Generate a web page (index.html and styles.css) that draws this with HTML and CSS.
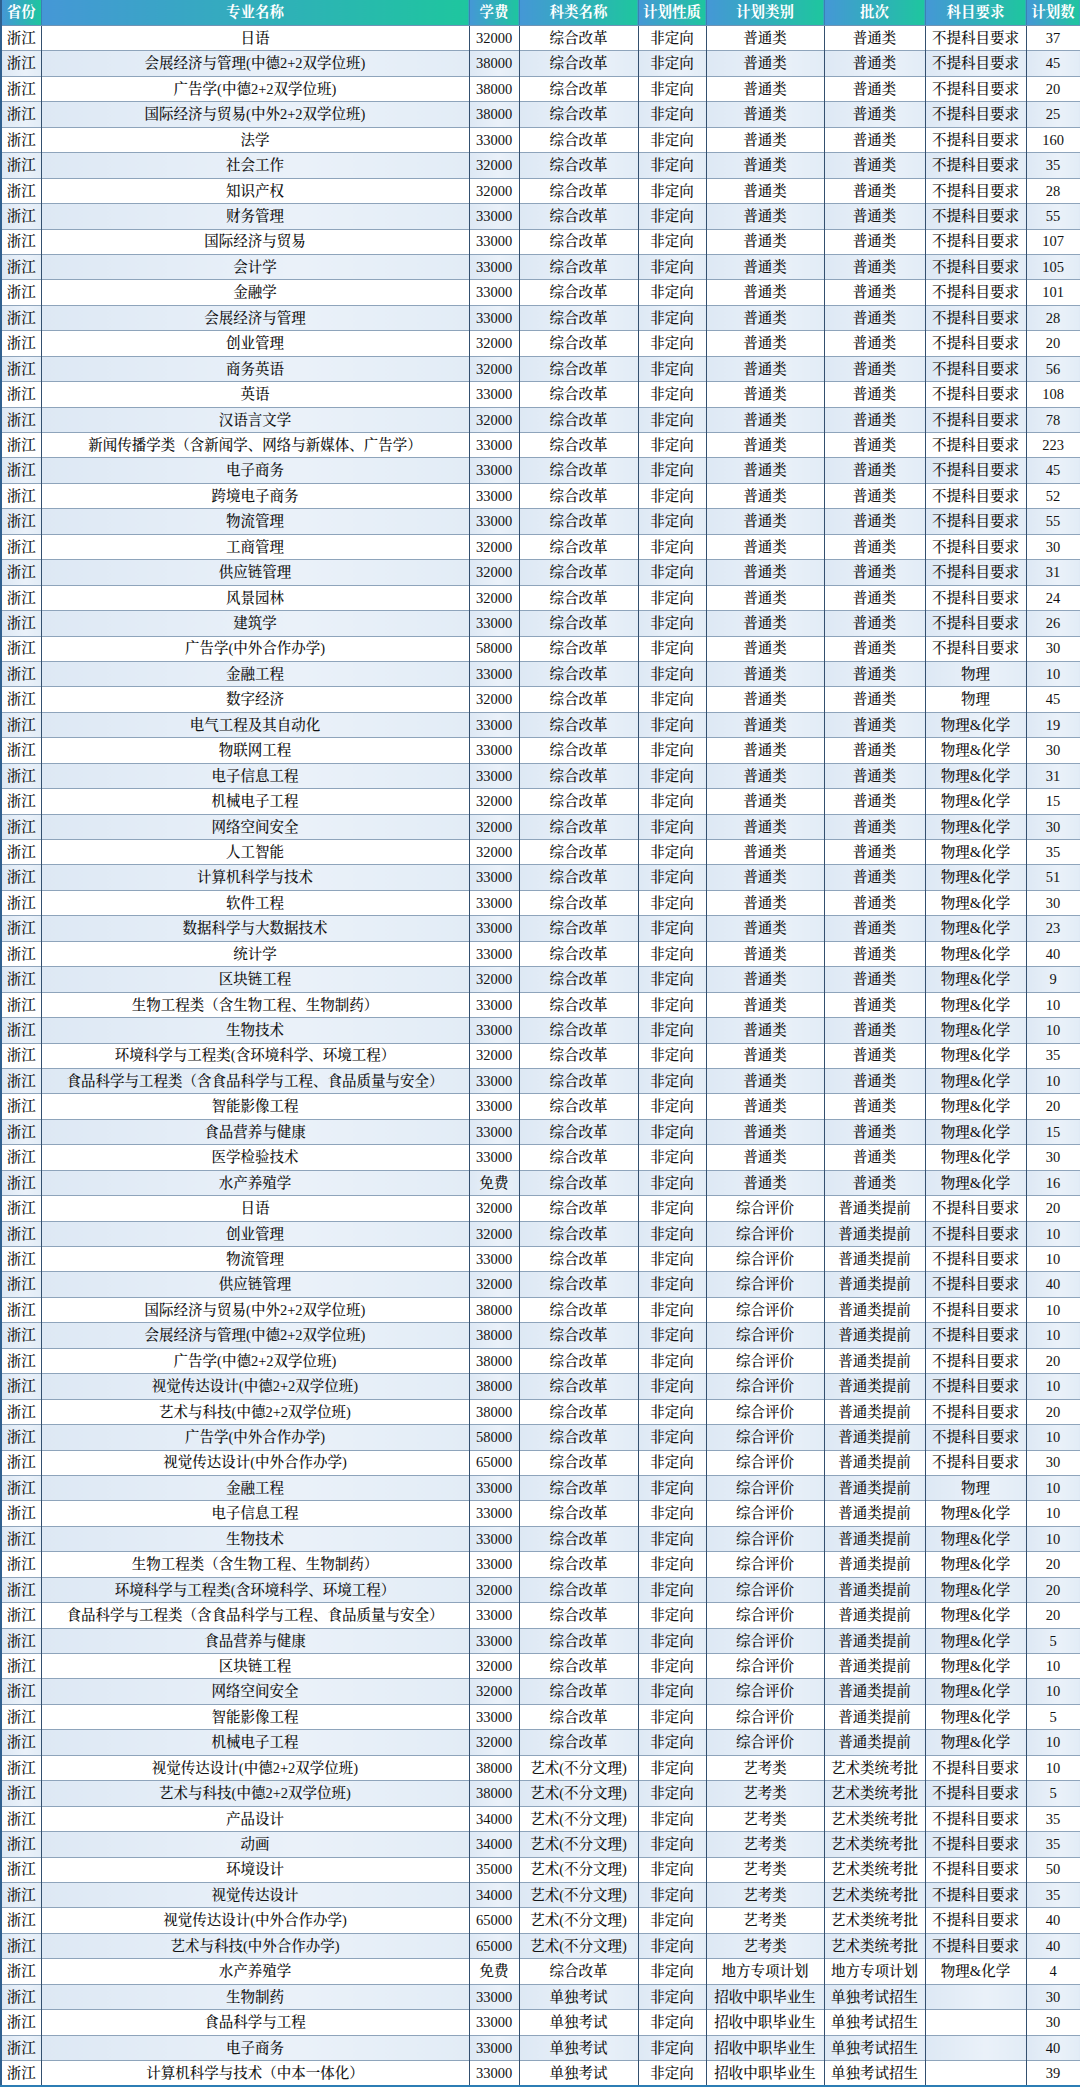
FILE: index.html
```html
<!DOCTYPE html>
<html lang="zh-CN">
<head>
<meta charset="utf-8">
<title>招生计划</title>
<link rel="stylesheet" href="styles.css">
</head>
<body>
<table class="plan">
<colgroup>
<col class="c-prov"><col class="c-name"><col class="c-fee"><col class="c-kind"><col class="c-nature"><col class="c-cat"><col class="c-batch"><col class="c-subj"><col class="c-num">
</colgroup>
<thead>
<tr><th>省份</th><th>专业名称</th><th>学费</th><th>科类名称</th><th>计划性质</th><th>计划类别</th><th>批次</th><th>科目要求</th><th>计划数</th></tr>
</thead>
<tbody>
<tr><td>浙江</td><td>日语</td><td>32000</td><td>综合改革</td><td>非定向</td><td>普通类</td><td>普通类</td><td>不提科目要求</td><td>37</td></tr>
<tr><td>浙江</td><td>会展经济与管理(中德2+2双学位班)</td><td>38000</td><td>综合改革</td><td>非定向</td><td>普通类</td><td>普通类</td><td>不提科目要求</td><td>45</td></tr>
<tr><td>浙江</td><td>广告学(中德2+2双学位班)</td><td>38000</td><td>综合改革</td><td>非定向</td><td>普通类</td><td>普通类</td><td>不提科目要求</td><td>20</td></tr>
<tr><td>浙江</td><td>国际经济与贸易(中外2+2双学位班)</td><td>38000</td><td>综合改革</td><td>非定向</td><td>普通类</td><td>普通类</td><td>不提科目要求</td><td>25</td></tr>
<tr><td>浙江</td><td>法学</td><td>33000</td><td>综合改革</td><td>非定向</td><td>普通类</td><td>普通类</td><td>不提科目要求</td><td>160</td></tr>
<tr><td>浙江</td><td>社会工作</td><td>32000</td><td>综合改革</td><td>非定向</td><td>普通类</td><td>普通类</td><td>不提科目要求</td><td>35</td></tr>
<tr><td>浙江</td><td>知识产权</td><td>32000</td><td>综合改革</td><td>非定向</td><td>普通类</td><td>普通类</td><td>不提科目要求</td><td>28</td></tr>
<tr><td>浙江</td><td>财务管理</td><td>33000</td><td>综合改革</td><td>非定向</td><td>普通类</td><td>普通类</td><td>不提科目要求</td><td>55</td></tr>
<tr><td>浙江</td><td>国际经济与贸易</td><td>33000</td><td>综合改革</td><td>非定向</td><td>普通类</td><td>普通类</td><td>不提科目要求</td><td>107</td></tr>
<tr><td>浙江</td><td>会计学</td><td>33000</td><td>综合改革</td><td>非定向</td><td>普通类</td><td>普通类</td><td>不提科目要求</td><td>105</td></tr>
<tr><td>浙江</td><td>金融学</td><td>33000</td><td>综合改革</td><td>非定向</td><td>普通类</td><td>普通类</td><td>不提科目要求</td><td>101</td></tr>
<tr><td>浙江</td><td>会展经济与管理</td><td>33000</td><td>综合改革</td><td>非定向</td><td>普通类</td><td>普通类</td><td>不提科目要求</td><td>28</td></tr>
<tr><td>浙江</td><td>创业管理</td><td>32000</td><td>综合改革</td><td>非定向</td><td>普通类</td><td>普通类</td><td>不提科目要求</td><td>20</td></tr>
<tr><td>浙江</td><td>商务英语</td><td>32000</td><td>综合改革</td><td>非定向</td><td>普通类</td><td>普通类</td><td>不提科目要求</td><td>56</td></tr>
<tr><td>浙江</td><td>英语</td><td>33000</td><td>综合改革</td><td>非定向</td><td>普通类</td><td>普通类</td><td>不提科目要求</td><td>108</td></tr>
<tr><td>浙江</td><td>汉语言文学</td><td>32000</td><td>综合改革</td><td>非定向</td><td>普通类</td><td>普通类</td><td>不提科目要求</td><td>78</td></tr>
<tr><td>浙江</td><td>新闻传播学类（含新闻学、网络与新媒体、广告学）</td><td>33000</td><td>综合改革</td><td>非定向</td><td>普通类</td><td>普通类</td><td>不提科目要求</td><td>223</td></tr>
<tr><td>浙江</td><td>电子商务</td><td>33000</td><td>综合改革</td><td>非定向</td><td>普通类</td><td>普通类</td><td>不提科目要求</td><td>45</td></tr>
<tr><td>浙江</td><td>跨境电子商务</td><td>33000</td><td>综合改革</td><td>非定向</td><td>普通类</td><td>普通类</td><td>不提科目要求</td><td>52</td></tr>
<tr><td>浙江</td><td>物流管理</td><td>33000</td><td>综合改革</td><td>非定向</td><td>普通类</td><td>普通类</td><td>不提科目要求</td><td>55</td></tr>
<tr><td>浙江</td><td>工商管理</td><td>32000</td><td>综合改革</td><td>非定向</td><td>普通类</td><td>普通类</td><td>不提科目要求</td><td>30</td></tr>
<tr><td>浙江</td><td>供应链管理</td><td>32000</td><td>综合改革</td><td>非定向</td><td>普通类</td><td>普通类</td><td>不提科目要求</td><td>31</td></tr>
<tr><td>浙江</td><td>风景园林</td><td>32000</td><td>综合改革</td><td>非定向</td><td>普通类</td><td>普通类</td><td>不提科目要求</td><td>24</td></tr>
<tr><td>浙江</td><td>建筑学</td><td>33000</td><td>综合改革</td><td>非定向</td><td>普通类</td><td>普通类</td><td>不提科目要求</td><td>26</td></tr>
<tr><td>浙江</td><td>广告学(中外合作办学)</td><td>58000</td><td>综合改革</td><td>非定向</td><td>普通类</td><td>普通类</td><td>不提科目要求</td><td>30</td></tr>
<tr><td>浙江</td><td>金融工程</td><td>33000</td><td>综合改革</td><td>非定向</td><td>普通类</td><td>普通类</td><td>物理</td><td>10</td></tr>
<tr><td>浙江</td><td>数字经济</td><td>32000</td><td>综合改革</td><td>非定向</td><td>普通类</td><td>普通类</td><td>物理</td><td>45</td></tr>
<tr><td>浙江</td><td>电气工程及其自动化</td><td>33000</td><td>综合改革</td><td>非定向</td><td>普通类</td><td>普通类</td><td>物理&amp;化学</td><td>19</td></tr>
<tr><td>浙江</td><td>物联网工程</td><td>33000</td><td>综合改革</td><td>非定向</td><td>普通类</td><td>普通类</td><td>物理&amp;化学</td><td>30</td></tr>
<tr><td>浙江</td><td>电子信息工程</td><td>33000</td><td>综合改革</td><td>非定向</td><td>普通类</td><td>普通类</td><td>物理&amp;化学</td><td>31</td></tr>
<tr><td>浙江</td><td>机械电子工程</td><td>32000</td><td>综合改革</td><td>非定向</td><td>普通类</td><td>普通类</td><td>物理&amp;化学</td><td>15</td></tr>
<tr><td>浙江</td><td>网络空间安全</td><td>32000</td><td>综合改革</td><td>非定向</td><td>普通类</td><td>普通类</td><td>物理&amp;化学</td><td>30</td></tr>
<tr><td>浙江</td><td>人工智能</td><td>32000</td><td>综合改革</td><td>非定向</td><td>普通类</td><td>普通类</td><td>物理&amp;化学</td><td>35</td></tr>
<tr><td>浙江</td><td>计算机科学与技术</td><td>33000</td><td>综合改革</td><td>非定向</td><td>普通类</td><td>普通类</td><td>物理&amp;化学</td><td>51</td></tr>
<tr><td>浙江</td><td>软件工程</td><td>33000</td><td>综合改革</td><td>非定向</td><td>普通类</td><td>普通类</td><td>物理&amp;化学</td><td>30</td></tr>
<tr><td>浙江</td><td>数据科学与大数据技术</td><td>33000</td><td>综合改革</td><td>非定向</td><td>普通类</td><td>普通类</td><td>物理&amp;化学</td><td>23</td></tr>
<tr><td>浙江</td><td>统计学</td><td>33000</td><td>综合改革</td><td>非定向</td><td>普通类</td><td>普通类</td><td>物理&amp;化学</td><td>40</td></tr>
<tr><td>浙江</td><td>区块链工程</td><td>32000</td><td>综合改革</td><td>非定向</td><td>普通类</td><td>普通类</td><td>物理&amp;化学</td><td>9</td></tr>
<tr><td>浙江</td><td>生物工程类（含生物工程、生物制药）</td><td>33000</td><td>综合改革</td><td>非定向</td><td>普通类</td><td>普通类</td><td>物理&amp;化学</td><td>10</td></tr>
<tr><td>浙江</td><td>生物技术</td><td>33000</td><td>综合改革</td><td>非定向</td><td>普通类</td><td>普通类</td><td>物理&amp;化学</td><td>10</td></tr>
<tr><td>浙江</td><td>环境科学与工程类(含环境科学、环境工程）</td><td>32000</td><td>综合改革</td><td>非定向</td><td>普通类</td><td>普通类</td><td>物理&amp;化学</td><td>35</td></tr>
<tr><td>浙江</td><td>食品科学与工程类（含食品科学与工程、食品质量与安全）</td><td>33000</td><td>综合改革</td><td>非定向</td><td>普通类</td><td>普通类</td><td>物理&amp;化学</td><td>10</td></tr>
<tr><td>浙江</td><td>智能影像工程</td><td>33000</td><td>综合改革</td><td>非定向</td><td>普通类</td><td>普通类</td><td>物理&amp;化学</td><td>20</td></tr>
<tr><td>浙江</td><td>食品营养与健康</td><td>33000</td><td>综合改革</td><td>非定向</td><td>普通类</td><td>普通类</td><td>物理&amp;化学</td><td>15</td></tr>
<tr><td>浙江</td><td>医学检验技术</td><td>33000</td><td>综合改革</td><td>非定向</td><td>普通类</td><td>普通类</td><td>物理&amp;化学</td><td>30</td></tr>
<tr><td>浙江</td><td>水产养殖学</td><td>免费</td><td>综合改革</td><td>非定向</td><td>普通类</td><td>普通类</td><td>物理&amp;化学</td><td>16</td></tr>
<tr><td>浙江</td><td>日语</td><td>32000</td><td>综合改革</td><td>非定向</td><td>综合评价</td><td>普通类提前</td><td>不提科目要求</td><td>20</td></tr>
<tr><td>浙江</td><td>创业管理</td><td>32000</td><td>综合改革</td><td>非定向</td><td>综合评价</td><td>普通类提前</td><td>不提科目要求</td><td>10</td></tr>
<tr><td>浙江</td><td>物流管理</td><td>33000</td><td>综合改革</td><td>非定向</td><td>综合评价</td><td>普通类提前</td><td>不提科目要求</td><td>10</td></tr>
<tr><td>浙江</td><td>供应链管理</td><td>32000</td><td>综合改革</td><td>非定向</td><td>综合评价</td><td>普通类提前</td><td>不提科目要求</td><td>40</td></tr>
<tr><td>浙江</td><td>国际经济与贸易(中外2+2双学位班)</td><td>38000</td><td>综合改革</td><td>非定向</td><td>综合评价</td><td>普通类提前</td><td>不提科目要求</td><td>10</td></tr>
<tr><td>浙江</td><td>会展经济与管理(中德2+2双学位班)</td><td>38000</td><td>综合改革</td><td>非定向</td><td>综合评价</td><td>普通类提前</td><td>不提科目要求</td><td>10</td></tr>
<tr><td>浙江</td><td>广告学(中德2+2双学位班)</td><td>38000</td><td>综合改革</td><td>非定向</td><td>综合评价</td><td>普通类提前</td><td>不提科目要求</td><td>20</td></tr>
<tr><td>浙江</td><td>视觉传达设计(中德2+2双学位班)</td><td>38000</td><td>综合改革</td><td>非定向</td><td>综合评价</td><td>普通类提前</td><td>不提科目要求</td><td>10</td></tr>
<tr><td>浙江</td><td>艺术与科技(中德2+2双学位班)</td><td>38000</td><td>综合改革</td><td>非定向</td><td>综合评价</td><td>普通类提前</td><td>不提科目要求</td><td>20</td></tr>
<tr><td>浙江</td><td>广告学(中外合作办学)</td><td>58000</td><td>综合改革</td><td>非定向</td><td>综合评价</td><td>普通类提前</td><td>不提科目要求</td><td>10</td></tr>
<tr><td>浙江</td><td>视觉传达设计(中外合作办学)</td><td>65000</td><td>综合改革</td><td>非定向</td><td>综合评价</td><td>普通类提前</td><td>不提科目要求</td><td>30</td></tr>
<tr><td>浙江</td><td>金融工程</td><td>33000</td><td>综合改革</td><td>非定向</td><td>综合评价</td><td>普通类提前</td><td>物理</td><td>10</td></tr>
<tr><td>浙江</td><td>电子信息工程</td><td>33000</td><td>综合改革</td><td>非定向</td><td>综合评价</td><td>普通类提前</td><td>物理&amp;化学</td><td>10</td></tr>
<tr><td>浙江</td><td>生物技术</td><td>33000</td><td>综合改革</td><td>非定向</td><td>综合评价</td><td>普通类提前</td><td>物理&amp;化学</td><td>10</td></tr>
<tr><td>浙江</td><td>生物工程类（含生物工程、生物制药）</td><td>33000</td><td>综合改革</td><td>非定向</td><td>综合评价</td><td>普通类提前</td><td>物理&amp;化学</td><td>20</td></tr>
<tr><td>浙江</td><td>环境科学与工程类(含环境科学、环境工程）</td><td>32000</td><td>综合改革</td><td>非定向</td><td>综合评价</td><td>普通类提前</td><td>物理&amp;化学</td><td>20</td></tr>
<tr><td>浙江</td><td>食品科学与工程类（含食品科学与工程、食品质量与安全）</td><td>33000</td><td>综合改革</td><td>非定向</td><td>综合评价</td><td>普通类提前</td><td>物理&amp;化学</td><td>20</td></tr>
<tr><td>浙江</td><td>食品营养与健康</td><td>33000</td><td>综合改革</td><td>非定向</td><td>综合评价</td><td>普通类提前</td><td>物理&amp;化学</td><td>5</td></tr>
<tr><td>浙江</td><td>区块链工程</td><td>32000</td><td>综合改革</td><td>非定向</td><td>综合评价</td><td>普通类提前</td><td>物理&amp;化学</td><td>10</td></tr>
<tr><td>浙江</td><td>网络空间安全</td><td>32000</td><td>综合改革</td><td>非定向</td><td>综合评价</td><td>普通类提前</td><td>物理&amp;化学</td><td>10</td></tr>
<tr><td>浙江</td><td>智能影像工程</td><td>33000</td><td>综合改革</td><td>非定向</td><td>综合评价</td><td>普通类提前</td><td>物理&amp;化学</td><td>5</td></tr>
<tr><td>浙江</td><td>机械电子工程</td><td>32000</td><td>综合改革</td><td>非定向</td><td>综合评价</td><td>普通类提前</td><td>物理&amp;化学</td><td>10</td></tr>
<tr><td>浙江</td><td>视觉传达设计(中德2+2双学位班)</td><td>38000</td><td>艺术(不分文理)</td><td>非定向</td><td>艺考类</td><td>艺术类统考批</td><td>不提科目要求</td><td>10</td></tr>
<tr><td>浙江</td><td>艺术与科技(中德2+2双学位班)</td><td>38000</td><td>艺术(不分文理)</td><td>非定向</td><td>艺考类</td><td>艺术类统考批</td><td>不提科目要求</td><td>5</td></tr>
<tr><td>浙江</td><td>产品设计</td><td>34000</td><td>艺术(不分文理)</td><td>非定向</td><td>艺考类</td><td>艺术类统考批</td><td>不提科目要求</td><td>35</td></tr>
<tr><td>浙江</td><td>动画</td><td>34000</td><td>艺术(不分文理)</td><td>非定向</td><td>艺考类</td><td>艺术类统考批</td><td>不提科目要求</td><td>35</td></tr>
<tr><td>浙江</td><td>环境设计</td><td>35000</td><td>艺术(不分文理)</td><td>非定向</td><td>艺考类</td><td>艺术类统考批</td><td>不提科目要求</td><td>50</td></tr>
<tr><td>浙江</td><td>视觉传达设计</td><td>34000</td><td>艺术(不分文理)</td><td>非定向</td><td>艺考类</td><td>艺术类统考批</td><td>不提科目要求</td><td>35</td></tr>
<tr><td>浙江</td><td>视觉传达设计(中外合作办学)</td><td>65000</td><td>艺术(不分文理)</td><td>非定向</td><td>艺考类</td><td>艺术类统考批</td><td>不提科目要求</td><td>40</td></tr>
<tr><td>浙江</td><td>艺术与科技(中外合作办学)</td><td>65000</td><td>艺术(不分文理)</td><td>非定向</td><td>艺考类</td><td>艺术类统考批</td><td>不提科目要求</td><td>40</td></tr>
<tr><td>浙江</td><td>水产养殖学</td><td>免费</td><td>综合改革</td><td>非定向</td><td>地方专项计划</td><td>地方专项计划</td><td>物理&amp;化学</td><td>4</td></tr>
<tr><td>浙江</td><td>生物制药</td><td>33000</td><td>单独考试</td><td>非定向</td><td>招收中职毕业生</td><td>单独考试招生</td><td></td><td>30</td></tr>
<tr><td>浙江</td><td>食品科学与工程</td><td>33000</td><td>单独考试</td><td>非定向</td><td>招收中职毕业生</td><td>单独考试招生</td><td></td><td>30</td></tr>
<tr><td>浙江</td><td>电子商务</td><td>33000</td><td>单独考试</td><td>非定向</td><td>招收中职毕业生</td><td>单独考试招生</td><td></td><td>40</td></tr>
<tr><td>浙江</td><td>计算机科学与技术（中本一体化）</td><td>33000</td><td>单独考试</td><td>非定向</td><td>招收中职毕业生</td><td>单独考试招生</td><td></td><td>39</td></tr>
</tbody>
</table>
</body>
</html>
```

FILE: styles.css
```css
html, body {
  margin: 0;
  padding: 0;
  background: #ffffff;
}

.plan {
  width: 1080px;
  border-collapse: collapse;
  table-layout: fixed;
  font-family: "Liberation Serif", "Noto Serif CJK SC", "Noto Sans CJK SC", serif;
  font-size: 14.5px;
  font-weight: 500;
  color: #111111;
  border-left: 2px solid #2f5f8e;
  border-right: 3px solid #2f5f8e;
  border-bottom: 4px solid #2c7db4;
}

.c-prov { width: 40px; }
.c-name { width: 428px; }
.c-fee { width: 50px; }
.c-kind { width: 119px; }
.c-nature { width: 68px; }
.c-cat { width: 118px; }
.c-batch { width: 101px; }
.c-subj { width: 101px; }
.c-num { width: 55px; }

.plan th {
  height: 25px;
  padding: 0;
  color: #ffffff;
  font-weight: bold;
  text-align: center;
  background: linear-gradient(90deg, #4597d6 0%, #2fb0b8 55%, #1ec69e 100%);
  border-left: 1px solid #3b7fb5;
  border-bottom: 1px solid #6f93b5;
  white-space: nowrap;
  overflow: hidden;
  line-height: 1;
}

.plan td {
  height: 24.45px;
  padding: 0;
  text-align: center;
  white-space: nowrap;
  overflow: hidden;
  border-left: 1px solid #34506f;
  border-top: 1px solid #8ea4bb;
  line-height: 1;
}

.plan tbody tr:nth-child(even) td {
  background: linear-gradient(90deg, #dde8f4 0%, #eaf1f9 60%, #e2ecf6 100%);
}

.plan tbody tr:nth-child(odd) td {
  background: #ffffff;
}
```
